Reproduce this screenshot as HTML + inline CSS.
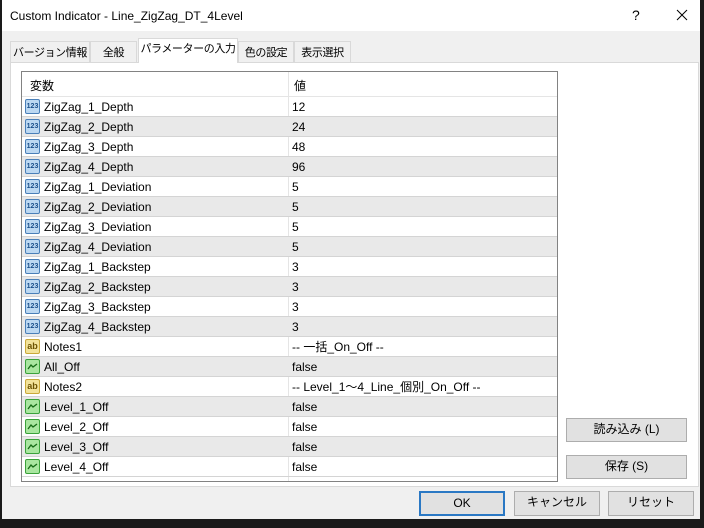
<!DOCTYPE html>
<html><head><meta charset="utf-8"><style>
*{margin:0;padding:0;box-sizing:border-box}
body{width:704px;height:528px;background:#1a1a1a;position:relative;overflow:hidden;font-family:"Liberation Sans","Noto Sans CJK JP",sans-serif;font-size:12px;line-height:14px;color:#000}
span,div{white-space:nowrap}
.win{position:absolute;left:2px;top:0;width:698px;height:519px;background:#f0f0f0}
.title{position:absolute;left:0;top:0;width:698px;height:31px;background:#fff}
.title span{position:absolute;left:8px;top:9px;font-size:12px}
.tab{position:absolute;top:41px;height:22px;border:1px solid #d9d9d9;border-bottom:none;background:#f0f0f0;padding-top:4px;text-align:center;font-size:11px;letter-spacing:-0.4px;overflow:hidden}
.tab.sel{top:38px;height:25px;background:#fff;z-index:2;padding-top:3px}
.panel{position:absolute;left:8px;top:62px;width:689px;height:425px;background:#fff;border:1px solid #d9d9d9}
.list{position:absolute;left:19px;top:71px;width:537px;height:411px;border:1px solid #828282;background:#fff;overflow:hidden}
.hdr{height:25px;border-bottom:1px solid #e5e5e5;position:relative}
.hdr span{position:absolute;top:7px}
.row{height:20px;position:relative;border-bottom:1px solid #d4d4d4}
.row.g{background:#e9e9e9}
.row .n{position:absolute;left:22px;top:3px}
.row .v{position:absolute;left:270px;top:3px}
.cd{position:absolute;left:266px;top:0;width:1px;height:100%;background:#e5e5e5}
.ic{position:absolute;left:3px;top:2px;width:15px;height:15px;border-radius:2px;font-size:7px;font-weight:bold;text-align:center;line-height:13px}
.i1{background:#bcd8f2;border:1px solid #4a7fb8;color:#1a4f8a}
.i2{background:#f3e39a;border:1px solid #c9a93a;color:#6b5200;font-size:9px}
.i3{background:#a9e6a0;border:1px solid #3aa23a}
.btn{position:absolute;background:#e1e1e1;border:1px solid #adadad;text-align:center;font-size:12px;line-height:21px}
</style></head><body>
<div class="win">
<div class="title"><span>Custom Indicator - Line_ZigZag_DT_4Level</span>
<span style="left:630px;top:8px;font-size:14px">?</span>
<svg style="position:absolute;left:674px;top:9px" width="12" height="12"><path d="M1 1L11 11M11 1L1 11" stroke="#000" stroke-width="1"/></svg></div>
<div class="tab" style="left:8px;width:80px">バージョン情報</div>
<div class="tab" style="left:88px;width:47px">全般</div>
<div class="tab sel" style="left:136px;width:100px">パラメーターの入力</div>
<div class="tab" style="left:236px;width:56px">色の設定</div>
<div class="tab" style="left:292px;width:57px">表示選択</div>
<div class="panel"></div>
<div class="list">
<div class="cd"></div>
<div class="hdr"><span style="left:8px">変数</span><span style="left:272px">値</span></div>
<div class="row"><div class="ic i1">123</div><span class="n">ZigZag_1_Depth</span><span class="v">12</span></div>
<div class="row g"><div class="ic i1">123</div><span class="n">ZigZag_2_Depth</span><span class="v">24</span></div>
<div class="row"><div class="ic i1">123</div><span class="n">ZigZag_3_Depth</span><span class="v">48</span></div>
<div class="row g"><div class="ic i1">123</div><span class="n">ZigZag_4_Depth</span><span class="v">96</span></div>
<div class="row"><div class="ic i1">123</div><span class="n">ZigZag_1_Deviation</span><span class="v">5</span></div>
<div class="row g"><div class="ic i1">123</div><span class="n">ZigZag_2_Deviation</span><span class="v">5</span></div>
<div class="row"><div class="ic i1">123</div><span class="n">ZigZag_3_Deviation</span><span class="v">5</span></div>
<div class="row g"><div class="ic i1">123</div><span class="n">ZigZag_4_Deviation</span><span class="v">5</span></div>
<div class="row"><div class="ic i1">123</div><span class="n">ZigZag_1_Backstep</span><span class="v">3</span></div>
<div class="row g"><div class="ic i1">123</div><span class="n">ZigZag_2_Backstep</span><span class="v">3</span></div>
<div class="row"><div class="ic i1">123</div><span class="n">ZigZag_3_Backstep</span><span class="v">3</span></div>
<div class="row g"><div class="ic i1">123</div><span class="n">ZigZag_4_Backstep</span><span class="v">3</span></div>
<div class="row"><div class="ic i2">ab</div><span class="n">Notes1</span><span class="v">-- 一括_On_Off --</span></div>
<div class="row g"><div class="ic i3"><svg width="13" height="13"><path d="M2 9l3-4 2 2 4-3" stroke="#176b17" fill="none" stroke-width="1.3"/></svg></div><span class="n">All_Off</span><span class="v">false</span></div>
<div class="row"><div class="ic i2">ab</div><span class="n">Notes2</span><span class="v">-- Level_1～4_Line_個別_On_Off --</span></div>
<div class="row g"><div class="ic i3"><svg width="13" height="13"><path d="M2 9l3-4 2 2 4-3" stroke="#176b17" fill="none" stroke-width="1.3"/></svg></div><span class="n">Level_1_Off</span><span class="v">false</span></div>
<div class="row"><div class="ic i3"><svg width="13" height="13"><path d="M2 9l3-4 2 2 4-3" stroke="#176b17" fill="none" stroke-width="1.3"/></svg></div><span class="n">Level_2_Off</span><span class="v">false</span></div>
<div class="row g"><div class="ic i3"><svg width="13" height="13"><path d="M2 9l3-4 2 2 4-3" stroke="#176b17" fill="none" stroke-width="1.3"/></svg></div><span class="n">Level_3_Off</span><span class="v">false</span></div>
<div class="row"><div class="ic i3"><svg width="13" height="13"><path d="M2 9l3-4 2 2 4-3" stroke="#176b17" fill="none" stroke-width="1.3"/></svg></div><span class="n">Level_4_Off</span><span class="v">false</span></div>
</div>
<div class="btn" style="left:564px;top:418px;width:121px;height:24px">読み込み (L)</div>
<div class="btn" style="left:564px;top:455px;width:121px;height:24px">保存 (S)</div>
<div class="btn" style="left:417px;top:491px;width:86px;height:25px;border:2px solid #2a78c4;line-height:21px">OK</div>
<div class="btn" style="left:512px;top:491px;width:86px;height:25px">キャンセル</div>
<div class="btn" style="left:606px;top:491px;width:86px;height:25px">リセット</div>
</div>
</body></html>
